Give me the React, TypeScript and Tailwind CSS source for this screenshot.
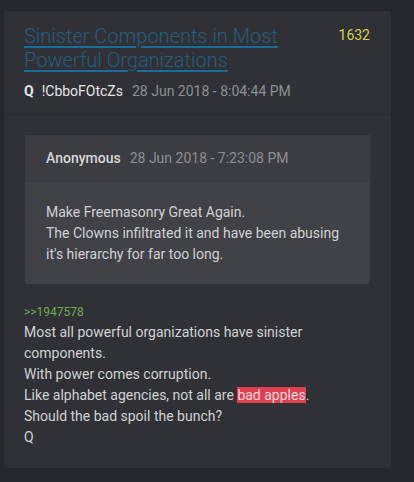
export default function App() {
  return (
    <div
      className="min-h-[482px] w-[414px] bg-[#25272c] pt-[11px] pl-[4px]"
      style={{ fontFamily: "Roboto, 'Noto Sans', sans-serif" }}
    >
      <div className="w-[387px] rounded-[3px] bg-[#2f3137]">
        {/* Header */}
        <div className="border-b border-[#2a2c31] px-[20px] pt-[13px] pb-[14px]">
          <div className="flex items-start justify-between gap-4">
            <a
              href="#"
              className="w-[300px] text-[20px] leading-[24px] font-light text-[#265e7b] underline decoration-[#1a6f9a] underline-offset-[3px]"
            >
              Sinister Components in Most Powerful Organizations
            </a>
            <span className="pt-[1px] pr-[1px] text-[14px] text-[#d8cf4c]">1632</span>
          </div>
          <div className="mt-[10px] flex items-center text-[14px] leading-[18px]">
            <span className="font-bold text-[#e4e5e7]">Q</span>
            <span className="ml-[8px] text-[#e4e5e7]">!CbboFOtcZs</span>
            <span className="ml-[9px] text-[#8d8f94]">28 Jun 2018 - 8:04:44 PM</span>
          </div>
        </div>

        {/* Body */}
        <div className="px-[20px] pt-[20px] pb-[20px]">
          <div className="ml-px w-[345px] rounded-[3px] bg-[#404248]">
            <div className="flex h-[47px] items-center border-b border-[#393b41] bg-[#3b3d43] px-[21px] text-[14px]">
              <span className="font-medium text-[#d6d7d9]">Anonymous</span>
              <span className="ml-[9px] text-[#8d8f94]">28 Jun 2018 - 7:23:08 PM</span>
            </div>
            <div className="px-[21px] pt-[20px] pb-[19px] text-[14px] leading-[21px] text-[#d0d1d3]">
              <p>Make Freemasonry Great Again.</p>
              <p>The Clowns infiltrated it and have been abusing</p>
              <p>it's hierarchy for far too long.</p>
            </div>
          </div>

          <div className="mt-[21px] text-[12px] leading-[14px] text-[#6cae4e]">&gt;&gt;1947578</div>
          <div className="mt-[3px] text-[14px] leading-[21px] text-[#d0d1d3]">
            <p>Most all powerful organizations have sinister</p>
            <p>components.</p>
            <p>With power comes corruption.</p>
            <p>
              Like alphabet agencies, not all are{" "}
              <span className="bg-[#e0404f] text-[#f6d9dc]">bad apples</span>.
            </p>
            <p>Should the bad spoil the bunch?</p>
            <p>Q</p>
          </div>
        </div>
      </div>
    </div>
  );
}
